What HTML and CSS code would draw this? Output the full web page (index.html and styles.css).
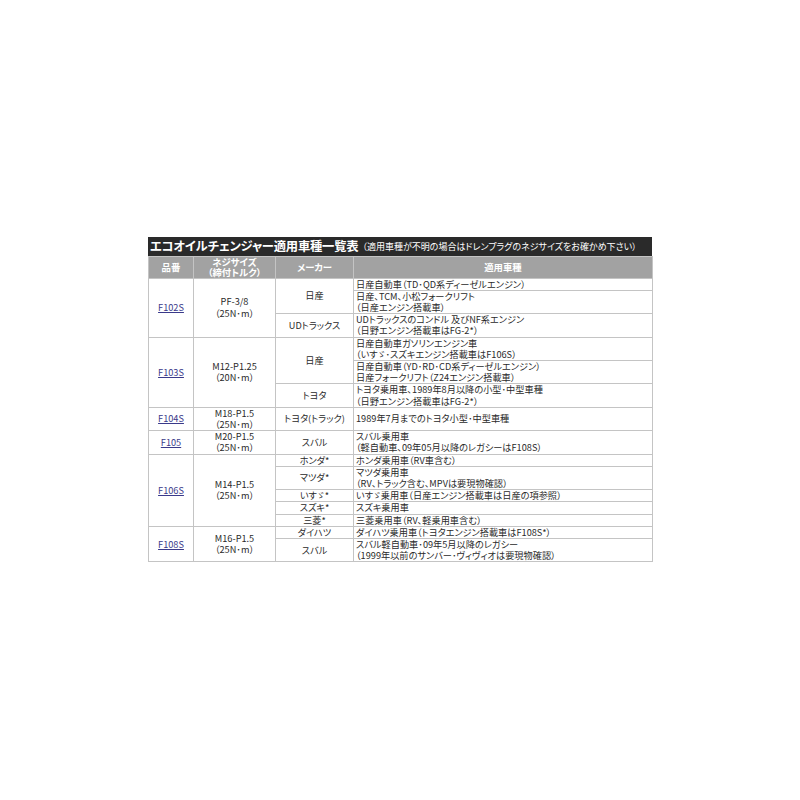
FILE: index.html
```html
<!DOCTYPE html>
<html lang="ja">
<head>
<meta charset="utf-8">
<link rel="stylesheet" href="styles.css">
</head>
<body>
<div class="page">
  <div class="block">
    <div class="title"><span class="title-main">エコオイルチェンジャー適用車種一覧表</span><span class="title-note">（適用車種が不明の場合はドレンプラグのネジサイズをお確かめ下さい）</span></div>
    <table class="list">
      <colgroup>
        <col class="c1"><col class="c2"><col class="c3"><col class="c4">
      </colgroup>
      <thead>
        <tr>
          <th>品番</th>
          <th>ネジサイズ<br>（締付トルク）</th>
          <th>メーカー</th>
          <th>適用車種</th>
        </tr>
      </thead>
      <tbody>
        <tr>
          <td class="ctr" rowspan="3"><a href="#">F102S</a></td>
          <td class="ctr" rowspan="3">PF-3/8<br>（25N･m）</td>
          <td class="ctr" rowspan="2">日産</td>
          <td>日産自動車（TD･QD系ディーゼルエンジン）</td>
        </tr>
        <tr><td>日産、TCM、小松フォークリフト<br>（日産エンジン搭載車）</td></tr>
        <tr>
          <td class="ctr">UDトラックス</td>
          <td>UDトラックスのコンドル 及びNF系エンジン<br>（日野エンジン搭載車はFG-2*）</td>
        </tr>
        <tr>
          <td class="ctr" rowspan="3"><a href="#">F103S</a></td>
          <td class="ctr" rowspan="3">M12-P1.25<br>（20N･m）</td>
          <td class="ctr" rowspan="2">日産</td>
          <td>日産自動車ガソリンエンジン車<br>（いすゞ･スズキエンジン搭載車はF106S）</td>
        </tr>
        <tr><td>日産自動車（YD･RD･CD系ディーゼルエンジン）<br>日産フォークリフト（Z24エンジン搭載車）</td></tr>
        <tr>
          <td class="ctr">トヨタ</td>
          <td>トヨタ乗用車、1989年8月以降の小型･中型車種<br>（日野エンジン搭載車はFG-2*）</td>
        </tr>
        <tr>
          <td class="ctr"><a href="#">F104S</a></td>
          <td class="ctr">M18-P1.5<br>（25N･m）</td>
          <td class="ctr">トヨタ(トラック)</td>
          <td>1989年7月までのトヨタ小型･中型車種</td>
        </tr>
        <tr>
          <td class="ctr"><a href="#">F105</a></td>
          <td class="ctr">M20-P1.5<br>（25N･m）</td>
          <td class="ctr">スバル</td>
          <td>スバル乗用車<br>（軽自動車、09年05月以降のレガシーはF108S）</td>
        </tr>
        <tr>
          <td class="ctr" rowspan="5"><a href="#">F106S</a></td>
          <td class="ctr" rowspan="5">M14-P1.5<br>（25N･m）</td>
          <td class="ctr">ホンダ*</td>
          <td>ホンダ乗用車（RV車含む）</td>
        </tr>
        <tr>
          <td class="ctr">マツダ*</td>
          <td>マツダ乗用車<br>（RV、トラック含む、MPVは要現物確認）</td>
        </tr>
        <tr>
          <td class="ctr">いすゞ*</td>
          <td>いすゞ乗用車（日産エンジン搭載車は日産の項参照）</td>
        </tr>
        <tr>
          <td class="ctr">スズキ*</td>
          <td>スズキ乗用車</td>
        </tr>
        <tr>
          <td class="ctr">三菱*</td>
          <td>三菱乗用車（RV、軽乗用車含む）</td>
        </tr>
        <tr>
          <td class="ctr" rowspan="2"><a href="#">F108S</a></td>
          <td class="ctr" rowspan="2">M16-P1.5<br>（25N･m）</td>
          <td class="ctr">ダイハツ</td>
          <td>ダイハツ乗用車（トヨタエンジン搭載車はF108S*）</td>
        </tr>
        <tr>
          <td class="ctr">スバル</td>
          <td>スバル軽自動車･09年5月以降のレガシー<br>（1999年以前のサンバー･ヴィヴィオは要現物確認）</td>
        </tr>
      </tbody>
    </table>
  </div>
</div>
</body>
</html>
```

FILE: styles.css
```css
html, body {
  margin: 0;
  padding: 0;
  background: #ffffff;
}
.page {
  width: 800px;
  height: 800px;
  display: flex;
  align-items: center;
  justify-content: center;
  font-family: "Noto Sans CJK JP", "DejaVu Sans", sans-serif;
  font-feature-settings: "palt";
  color: #2a2a2a;
}
.block {
  width: 504px;
  margin-top: -1px;
}
.title {
  height: 19px;
  background: #2a2a2a;
  color: #ffffff;
  display: flex;
  align-items: center;
  padding-left: 2px;
  white-space: nowrap;
  overflow: hidden;
}
.title-main {
  font-size: 12.3px;
  font-weight: bold;
  letter-spacing: -0.2px;
}
.title-note {
  font-size: 9px;
  margin-left: 4px;
}
.list {
  width: 504px;
  border-collapse: collapse;
  table-layout: fixed;
  font-size: 9.2px;
  line-height: 11.2px;
}
.c1 { width: 45px; }
.c2 { width: 82px; }
.c3 { width: 78px; }
.c4 { width: 299px; }
.list th {
  background: #a2a2a2;
  color: #ffffff;
  font-weight: bold;
  height: 21px;
  line-height: 10px;
  padding: 0;
  border: 1px solid #c4c4c4;
  text-align: center;
  font-size: 9.4px;
}
.list td {
  border: 1px solid #c4c4c4;
  padding: 0 2px;
  vertical-align: middle;
  white-space: nowrap;
}
.list td.ctr {
  text-align: center;
}
.list a {
  color: #3a3a8a;
  text-decoration: underline;
}
```
